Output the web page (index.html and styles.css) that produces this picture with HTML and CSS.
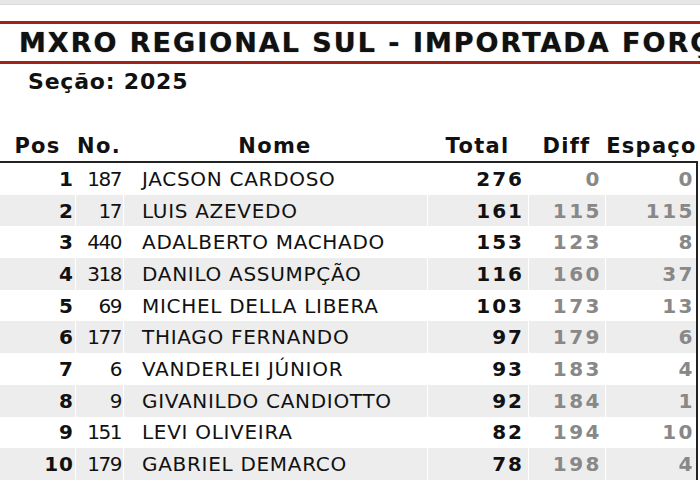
FILE: index.html
```html
<!DOCTYPE html>
<html lang="pt-BR">
	<head>
		<meta charset="UTF-8">
		<meta name="viewport" content="width=device-width, initial-scale=1">
		<title>MXRO Regional Sul</title>
		<link rel="stylesheet" href="styles.css">
	</head>
	<body>
		<div class="topbar"></div>

		<div class="title">MXRO REGIONAL SUL - IMPORTADA FORÇA LIVRE</div>
		<div class="season">Seção: 2025</div>

		<table class="standings">
			<thead>
				<tr>
					<th class="pos">Pos</th>
					<th class="num">No.</th>
					<th class="name">Nome</th>
					<th class="total">Total</th>
					<th class="diff">Diff</th>
					<th class="gap">Espaço</th>
				</tr>
			</thead>
			<tbody>
				<tr><td class="pos">1</td><td class="num">187</td><td class="name">JACSON CARDOSO</td><td class="total">276</td><td class="diff">0</td><td class="gap">0</td></tr>
				<tr><td class="pos">2</td><td class="num">17</td><td class="name">LUIS AZEVEDO</td><td class="total">161</td><td class="diff">115</td><td class="gap">115</td></tr>
				<tr><td class="pos">3</td><td class="num">440</td><td class="name">ADALBERTO MACHADO</td><td class="total">153</td><td class="diff">123</td><td class="gap">8</td></tr>
				<tr><td class="pos">4</td><td class="num">318</td><td class="name">DANILO ASSUMPÇÃO</td><td class="total">116</td><td class="diff">160</td><td class="gap">37</td></tr>
				<tr><td class="pos">5</td><td class="num">69</td><td class="name">MICHEL DELLA LIBERA</td><td class="total">103</td><td class="diff">173</td><td class="gap">13</td></tr>
				<tr><td class="pos">6</td><td class="num">177</td><td class="name">THIAGO FERNANDO</td><td class="total">97</td><td class="diff">179</td><td class="gap">6</td></tr>
				<tr><td class="pos">7</td><td class="num">6</td><td class="name">VANDERLEI JÚNIOR</td><td class="total">93</td><td class="diff">183</td><td class="gap">4</td></tr>
				<tr><td class="pos">8</td><td class="num">9</td><td class="name">GIVANILDO CANDIOTTO</td><td class="total">92</td><td class="diff">184</td><td class="gap">1</td></tr>
				<tr><td class="pos">9</td><td class="num">151</td><td class="name">LEVI OLIVEIRA</td><td class="total">82</td><td class="diff">194</td><td class="gap">10</td></tr>
				<tr><td class="pos">10</td><td class="num">179</td><td class="name">GABRIEL DEMARCO</td><td class="total">78</td><td class="diff">198</td><td class="gap">4</td></tr>
			</tbody>
		</table>
	</body>
</html>
```

FILE: styles.css
```css
html{
	overflow: hidden;
}
body{
	margin: 0;
	width: 700px;
	font-family: "DejaVu Sans", Verdana, sans-serif;
	color: #111;
	background: #fff;
}
.topbar{
	height: 4px;
	background: #e6e6e6;
	border-bottom: 1px solid #dadada;
}
.title{
	margin-top: 16px;
	height: 37px;
	line-height: 37px;
	padding-left: 19px;
	border-top: 3px solid #a1221b;
	border-bottom: 3px solid #a1221b;
	font-size: 27px;
	font-weight: bold;
	letter-spacing: 2px;
	white-space: nowrap;
	overflow: hidden;
	text-shadow: 0 0 1px #555;
}
.season{
	margin-top: 3px;
	padding-left: 28px;
	font-size: 22px;
	font-weight: bold;
	letter-spacing: 0.8px;
	line-height: 30px;
}
.standings{
	margin-top: 37px;
	width: 698px;
	table-layout: fixed;
	border-collapse: separate;
	border-spacing: 0;
	font-size: 20px;
}
.standings th, .standings td{
	box-sizing: border-box;
	white-space: nowrap;
}
.standings th{
	padding: 0 0 3px;
	text-align: center;
	font-size: 21px;
	font-weight: bold;
	letter-spacing: 1.3px;
	color: #111;
	border-bottom: 2px solid #222;
}
.standings td{
	height: 31.7px;
	padding: 0;
}
.standings td + td{
	border-left: 1px solid #fff;
}
.standings tbody tr:nth-child(even) td{
	background: #ededed;
}
.standings td:last-child{
	border-right: 2px solid #222;
}
th.pos{ width: 75px; }
th.num{ width: 48px; }
th.name{ width: 304px; }
th.total{ width: 101px; }
th.diff{ width: 77px; }
th.gap{ width: 93px; }
td.pos{
	text-align: right;
	padding-right: 1px;
	font-weight: bold;
	letter-spacing: 1px;
}
td.num{
	text-align: right;
	padding-right: 2px;
	letter-spacing: -1.5px;
}
td.name{
	padding-left: 18px;
	letter-spacing: 0.7px;
}
td.total{
	text-align: right;
	padding-right: 4px;
	font-weight: bold;
	letter-spacing: 2px;
}
td.diff, td.gap{
	text-align: right;
	font-weight: bold;
	letter-spacing: 2.5px;
	color: #888;
}
td.diff{
	padding-right: 3px;
}
td.gap{
	padding-right: 1px;
}
```
